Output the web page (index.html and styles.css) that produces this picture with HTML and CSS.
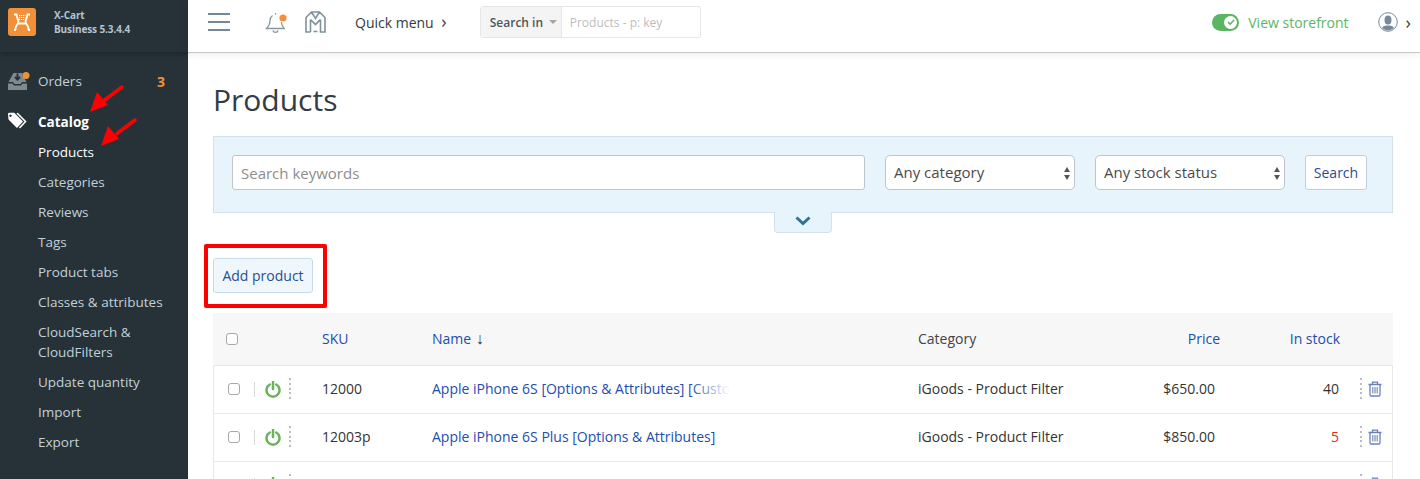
FILE: index.html
```html
<!DOCTYPE html>
<html lang="en">
<head>
<meta charset="utf-8">
<title>Products</title>
<link rel="stylesheet" href="styles.css">
</head>
<body>
<div class="app">
  <aside class="sidebar">
    <div class="brand">
      <svg class="logo" width="28" height="28" viewBox="0 0 28 28">
        <rect width="28" height="28" rx="3" fill="#f0913a"/>
        <path d="M6 6.500h2.500c.4 3 1.500 4.500 2 7.500M22 6.500h-2.500c-.4 3-1.500 4.500-2 7.500M10.500 14c-.5 2.500-3 3.500-3 6.500V22M17.500 14c.5 2.500 3 3.500 3 6.500V22M6 22h2M20 22h2M10 15.500h8" stroke="#fff" stroke-width="1.800" fill="none"/>
        <path d="M11 7.500h6.500M11 9.500h6.500M11 11.500h6.500" stroke="#fff" stroke-width="1.100" stroke-dasharray="1.200 .8"/>
      </svg>
      <div class="brand-text"><div>X-Cart</div><div>Business 5.3.4.4</div></div>
    </div>
    <nav class="nav">
      <div class="nav-top">
        <span class="nav-icon orders-icon">
          <svg width="24" height="20" viewBox="0 0 24 20">
            <path d="M5.500 2h9v3.500h1L18.500 11H14l-1.500 2h-6L5 11H.5z" fill="#7d8a91"/>
            <path d="M0 12.500h4.500l1.500 2h7l1.500-2H19V19H0z" fill="#7d8a91"/>
            <path d="M9.500 2.500v6M7 6l2.500 2.500L12 6" stroke="#263238" stroke-width="2" fill="none"/>
            <circle cx="18" cy="4.500" r="3.500" fill="#f0913a"/>
          </svg>
        </span>
        <span>Orders</span><b class="count">3</b>
      </div>
      <div class="nav-top active">
        <span class="nav-icon">
          <svg width="20" height="17" viewBox="0 0 20 17">
            <path fill-rule="evenodd" d="M0 1.500A1.500 1.500 0 0 1 1.500 0h4.500L15 9l-6 6.500L.5 7zM2.500 2a1.200 1.200 0 1 0 .01 0z" fill="#fff"/>
            <path d="M9 .5l8.500 8.500-6 6.500" stroke="#fff" stroke-width="1.600" fill="none"/>
          </svg>
        </span>
        <span>Catalog</span>
      </div>
      <a class="sub current">Products</a>
      <a class="sub">Categories</a>
      <a class="sub">Reviews</a>
      <a class="sub">Tags</a>
      <a class="sub">Product tabs</a>
      <a class="sub">Classes &amp; attributes</a>
      <a class="sub">CloudSearch &amp;<br>CloudFilters</a>
      <a class="sub">Update quantity</a>
      <a class="sub">Import</a>
      <a class="sub">Export</a>
    </nav>
  </aside>
  <div class="content">
    <header class="topbar">
      <div class="burger"><i></i><i></i><i></i></div>
      <svg class="bell" width="24" height="24" viewBox="0 0 24 24">
        <path d="M11.500 3v1.500M8.500 5.500C6.500 7 6 9 6 11c0 3-1.500 5.500-3.500 7.500H20c-1.500-2-2.500-4-2.700-6.500M9 20.500c.5 2.500 4.500 2.500 5 0" stroke="#86999f" fill="none" stroke-width="1.300"/>
        <circle cx="19" cy="8" r="3.600" fill="#f0913a"/>
      </svg>
      <svg class="mail" width="21" height="22" viewBox="0 0 21 22">
        <path d="M5.500 21H1V6.500L6.500 1h8L20 6.500V21h-4.500V8.500M5.500 21V8.500M6.500 1l4 6.500 4-6.500M5.500 8.500l5 5 5-5M8.500 20.500h4" stroke="#7f939d" fill="none" stroke-width="1.600"/>
      </svg>
      <span class="quick">Quick menu <span class="chev">›</span></span>
      <div class="search-in">
        <span class="search-label">Search in <i class="caret"></i></span>
        <span class="search-ph">Products - p: key</span>
      </div>
      <div class="top-right">
        <span class="toggle"><span class="knob"><svg width="10" height="10" viewBox="0 0 10 10"><path d="M2 5l2.200 2.200L8 3" stroke="#5cb565" stroke-width="1.600" fill="none"/></svg></span></span>
        <span class="store">View storefront</span>
        <svg class="avatar" width="20" height="20" viewBox="0 0 20 20">
          <defs><clipPath id="av"><circle cx="10" cy="10" r="8.500"/></clipPath></defs>
          <circle cx="10" cy="10" r="9.300" fill="#fff" stroke="#76899a" stroke-width="1"/>
          <g clip-path="url(#av)" fill="#76899a"><ellipse cx="10" cy="8" rx="3.500" ry="4.500"/><path d="M3 20c0-5 3-6 5-6.500h4c2 .5 5 1.500 5 6.500z"/></g>
        </svg>
        <span class="chev dark">›</span>
      </div>
    </header>
    <main class="main">
      <h1>Products</h1>
      <section class="filter">
        <div class="kw">Search keywords</div>
        <div class="sel sel-first">Any category<span class="arrows"></span></div>
        <div class="sel">Any stock status<span class="arrows"></span></div>
        <div class="go">Search</div>
        <div class="expand"><svg width="16" height="10" viewBox="0 0 16 10"><path d="M1.500 1.500L8 7.500l6.500-6" stroke="#2f7391" stroke-width="3" fill="none"/></svg></div>
      </section>
      <div class="actions"><button class="add">Add product</button></div>
      <section class="table">
        <div class="row head">
          <span class="c-check"><span class="box big"></span></span>
          <span class="c-sku link">SKU</span>
          <span class="c-name link">Name <span class="down">↓</span></span>
          <span class="c-cat">Category</span>
          <span class="c-price link">Price</span>
          <span class="c-stock link">In stock</span>
          <span class="c-end"></span>
        </div>
        <div class="row">
          <span class="c-check"><span class="box"></span><i class="sep"></i>
            <svg class="power" width="16" height="17" viewBox="0 0 16 17"><path d="M4.800 3.500a6.500 6.500 0 1 0 6.400 0M8 1v7" stroke="#6ab35c" stroke-width="2.500" fill="none" stroke-linecap="round"/></svg>
            <i class="dots"></i></span>
          <span class="c-sku">12000</span>
          <span class="c-name link fade">Apple iPhone 6S [Options &amp; Attributes] [Custom tabs]</span>
          <span class="c-cat">iGoods - Product Filter</span>
          <span class="c-price val">$650.00</span>
          <span class="c-stock val">40</span>
          <span class="c-end"><i class="dots"></i>
            <svg class="trash" width="14" height="16" viewBox="0 0 14 16"><path d="M.5 3.500h13M4.500 3.500V1.200h5v2.300M2 3.500v10.300q0 1.200 1.200 1.200h7.600q1.200 0 1.200-1.200V3.500" stroke="#6a82b8" stroke-width="1.300" fill="none"/><path d="M4.800 6v6.500M7 6v6.500M9.200 6v6.500" stroke="#6a82b8" stroke-width="1.100"/></svg></span>
        </div>
        <div class="row">
          <span class="c-check"><span class="box"></span><i class="sep"></i>
            <svg class="power" width="16" height="17" viewBox="0 0 16 17"><path d="M4.800 3.500a6.500 6.500 0 1 0 6.400 0M8 1v7" stroke="#6ab35c" stroke-width="2.500" fill="none" stroke-linecap="round"/></svg>
            <i class="dots"></i></span>
          <span class="c-sku">12003p</span>
          <span class="c-name link">Apple iPhone 6S Plus [Options &amp; Attributes]</span>
          <span class="c-cat">iGoods - Product Filter</span>
          <span class="c-price val">$850.00</span>
          <span class="c-stock val low">5</span>
          <span class="c-end"><i class="dots"></i>
            <svg class="trash" width="14" height="16" viewBox="0 0 14 16"><path d="M.5 3.500h13M4.500 3.500V1.200h5v2.300M2 3.500v10.300q0 1.200 1.200 1.200h7.600q1.200 0 1.200-1.200V3.500" stroke="#6a82b8" stroke-width="1.300" fill="none"/><path d="M4.800 6v6.500M7 6v6.500M9.200 6v6.500" stroke="#6a82b8" stroke-width="1.100"/></svg></span>
        </div>
        <div class="row">
          <span class="c-check"><span class="box"></span><i class="sep"></i>
            <svg class="power" width="16" height="17" viewBox="0 0 16 17"><path d="M4.800 3.500a6.500 6.500 0 1 0 6.400 0M8 1v7" stroke="#6ab35c" stroke-width="2.500" fill="none" stroke-linecap="round"/></svg>
            <i class="dots"></i></span>
          <span class="c-sku"></span>
          <span class="c-name"></span>
          <span class="c-cat"></span>
          <span class="c-price"></span>
          <span class="c-stock"></span>
          <span class="c-end"><i class="dots"></i>
            <svg class="trash" width="14" height="16" viewBox="0 0 14 16"><path d="M.5 3.500h13M4.500 3.500V1.200h5v2.300M2 3.500v10.300q0 1.200 1.200 1.200h7.600q1.200 0 1.200-1.200V3.500" stroke="#6a82b8" stroke-width="1.300" fill="none"/><path d="M4.800 6v6.500M7 6v6.500M9.200 6v6.500" stroke="#6a82b8" stroke-width="1.100"/></svg></span>
        </div>
      </section>
    </main>
  </div>
  <svg class="anno" width="1420" height="479" viewBox="0 0 1420 479">
    <path d="M122 87L104 100.500" stroke="#f00" stroke-width="3.500" stroke-linecap="round"/>
    <path d="M90 112l7-20 11 13z" fill="#f00"/>
    <path d="M135 120L117 133.500" stroke="#f00" stroke-width="3.500" stroke-linecap="round"/>
    <path d="M101 146l7-20 11 13z" fill="#f00"/>
  </svg>
  <div class="redbox"></div>
</div>
</body>
</html>
```
FILE: styles.css
```css
* { box-sizing: border-box; }
html, body { margin: 0; height: 479px; overflow: hidden; background: #fff; }
body { font-family: "Open Sans", "Liberation Sans", sans-serif; font-size: 14px; color: #333; }
.app { display: flex; height: 479px; position: relative; overflow: hidden; }

.sidebar { width: 188px; flex: none; background: #263238; color: #c3d0d8; }
.brand { height: 52px; display: flex; align-items: center; padding: 0 0 8px 8px; background: #263238; box-shadow: 0 2px 5px rgba(0,0,0,.25); }
.logo { flex: none; }
.brand-text { margin-left: 18px; font-size: 10px; font-weight: 700; line-height: 14px; color: #b4c3cd; letter-spacing: -.1px; }
.nav { padding-top: 9px; }
.nav-top { height: 40px; display: flex; align-items: center; padding-left: 38px; position: relative; font-size: 13.5px; }
.nav-icon { position: absolute; left: 8px; top: 50%; transform: translateY(-50%); display: flex; }
.count { margin-left: auto; margin-right: 23px; color: #f0913a; font-weight: 700; font-size: 14px; }
.nav-top.active { color: #fff; font-weight: 700; padding-top: 2px; }
.sub { display: block; padding: 0 10px 0 38px; font-size: 13.5px; line-height: 20px; margin-bottom: 10px; color: #c3d0d8; }
.sub.current { color: #fff; margin-top: 1px; }

.content { flex: 1; min-width: 0; display: flex; flex-direction: column; }
.topbar { height: 53px; flex: none; display: flex; align-items: center; border-bottom: 1px solid #c8c8c8; box-shadow: 0 1px 8px rgba(0,0,0,.08); padding: 0 0 8px 20px; background: #fff; position: relative; }
.burger { width: 22px; display: flex; flex-direction: column; gap: 6px; }
.burger i { display: block; height: 2px; background: #728896; }
.bell { margin-left: 34px; }
.mail { margin-left: 17px; }
.quick { margin-left: 29px; font-size: 14px; color: #333b44; white-space: nowrap; }
.chev { font-size: 18px; line-height: 14px; margin-left: 4px; color: #444; }
.search-in { margin-left: 33px; width: 221px; height: 32px; display: flex; border: 1px solid #e6e6e6; border-radius: 3px; font-size: 12px; }
.search-label { width: 81px; background: #f4f4f4; border-right: 1px solid #e6e6e6; display: flex; align-items: center; padding-left: 9px; font-weight: 600; color: #4f565c; }
.caret { width: 0; height: 0; border: 4px solid transparent; border-top-color: #a5a5a5; border-bottom: 0; margin-left: 6px; }
.search-ph { padding-left: 8px; display: flex; align-items: center; color: #bdbdbd; }
.top-right { margin-left: auto; display: flex; align-items: center; padding-right: 9px; }
.toggle { width: 27px; height: 17px; border-radius: 9px; background: #5cb565; display: flex; align-items: center; justify-content: flex-end; padding-right: 2px; }
.knob { width: 13px; height: 13px; border-radius: 50%; background: #fff; display: flex; align-items: center; justify-content: center; }
.store { margin-left: 9px; color: #5cb565; font-size: 14px; }
.avatar { margin-left: 29px; }
.chev.dark { margin-left: 8px; }

.main { padding: 0 27px 0 25px; }
h1 { margin: 24px 0 18px; font-size: 30px; line-height: 46px; font-weight: 400; color: #333b44; height: 41px; }
.filter { height: 77px; background: #e7f4fc; border: 1px solid #d3e1ea; display: flex; align-items: center; padding: 0 25px 4px 18px; position: relative; }
.kw { width: 633px; height: 35px; background: #fff; border: 1px solid #bfc5c9; border-radius: 3px; display: flex; align-items: center; padding-left: 8px; color: #8d8d8d; font-size: 15px; }
.sel { width: 190px; height: 35px; background: #fff; border: 1px solid #bfc5c9; border-radius: 5px; display: flex; align-items: center; padding: 0 0 2px 8px; color: #4b4b4b; margin-left: 20px; position: relative; font-size: 15px; }
.arrows { position: absolute; right: 3px; top: 11px; width: 7px; height: 13px; }
.arrows::before, .arrows::after { content: ""; position: absolute; left: 0; border: 3.5px solid transparent; }
.arrows::before { border-bottom: 5px solid #555; border-top: 0; top: 0; }
.arrows::after { bottom: 0; border-top: 5px solid #555; border-bottom: 0; }
.go { margin-left: 20px; width: 62px; height: 35px; background: #fff; border: 1px solid #bfd0dc; border-radius: 3px; display: flex; align-items: center; justify-content: center; color: #264f8d; }
.expand { position: absolute; left: 560px; top: 75px; width: 58px; height: 21px; background: #e7f4fc; border: 1px solid #d3e1ea; border-top: 0; border-radius: 0 0 4px 4px; display: flex; align-items: center; justify-content: center; padding-bottom: 3px; }
.actions { margin-top: 45px; height: 35px; }
.add { width: 100px; height: 35px; padding: 0; background: #eff7fd; border: 1px solid #c6dcec; border-radius: 3px; color: #264f8d; font: 14px "Open Sans", "Liberation Sans", sans-serif; }

.table { margin-top: 20px; }
.row { display: flex; align-items: center; height: 48px; border: 1px solid #e8e8e8; border-top: 0; padding-bottom: 1px; font-size: 14px; line-height: 20px; color: #333; }
.row.head { height: 53px; background: #f7f7f7; border-left-color: #f7f7f7; border-right-color: #f7f7f7; padding-bottom: 1px; line-height: 19px; color: #444; }
.link { color: #1c4db0; }
.c-check { width: 108px; flex: none; display: flex; align-items: center; padding-left: 14px; }
.head .c-check { padding: 1px 0 0 12px; }
.box { width: 12px; height: 12px; border: 1px solid #a8a8a8; border-radius: 3px; background: #fff; flex: none; }
.sep { width: 1px; height: 15px; background: #d8d8d8; margin-left: 14px; flex: none; }
.power { margin-left: 10px; flex: none; }
.dots { width: 2px; height: 22px; margin-left: 8px; flex: none; background: repeating-linear-gradient(#bbb 0 2px, transparent 2px 4.8px); }
.c-sku { width: 110px; flex: none; }
.c-name { width: 486px; flex: none; white-space: nowrap; }
.down { color: #333; font-size: 16px; line-height: 14px; margin-left: 1px; }
.fade { position: relative; width: 298px; margin-right: 188px; overflow: hidden; }
.fade::after { content: ""; position: absolute; right: 0; top: 0; bottom: 0; width: 40px; background: linear-gradient(90deg, rgba(255,255,255,0), #fff); }
.c-cat { width: 200px; flex: none; }
.c-price { width: 102px; flex: none; text-align: right; }
.c-price.val { padding-right: 5px; }
.c-stock { width: 120px; flex: none; text-align: right; }
.c-stock.val { padding-right: 1px; }
.low { color: #e02b20; }
.c-end { flex: 1; display: flex; align-items: center; padding-left: 20px; }
.c-end .dots { margin-left: 0; }
.trash { margin-left: 6px; }

.anno { position: absolute; left: 0; top: 0; pointer-events: none; }
.redbox { position: absolute; left: 204px; top: 244px; width: 123px; height: 64px; border: 4px solid #f00; border-radius: 2px; }
```
